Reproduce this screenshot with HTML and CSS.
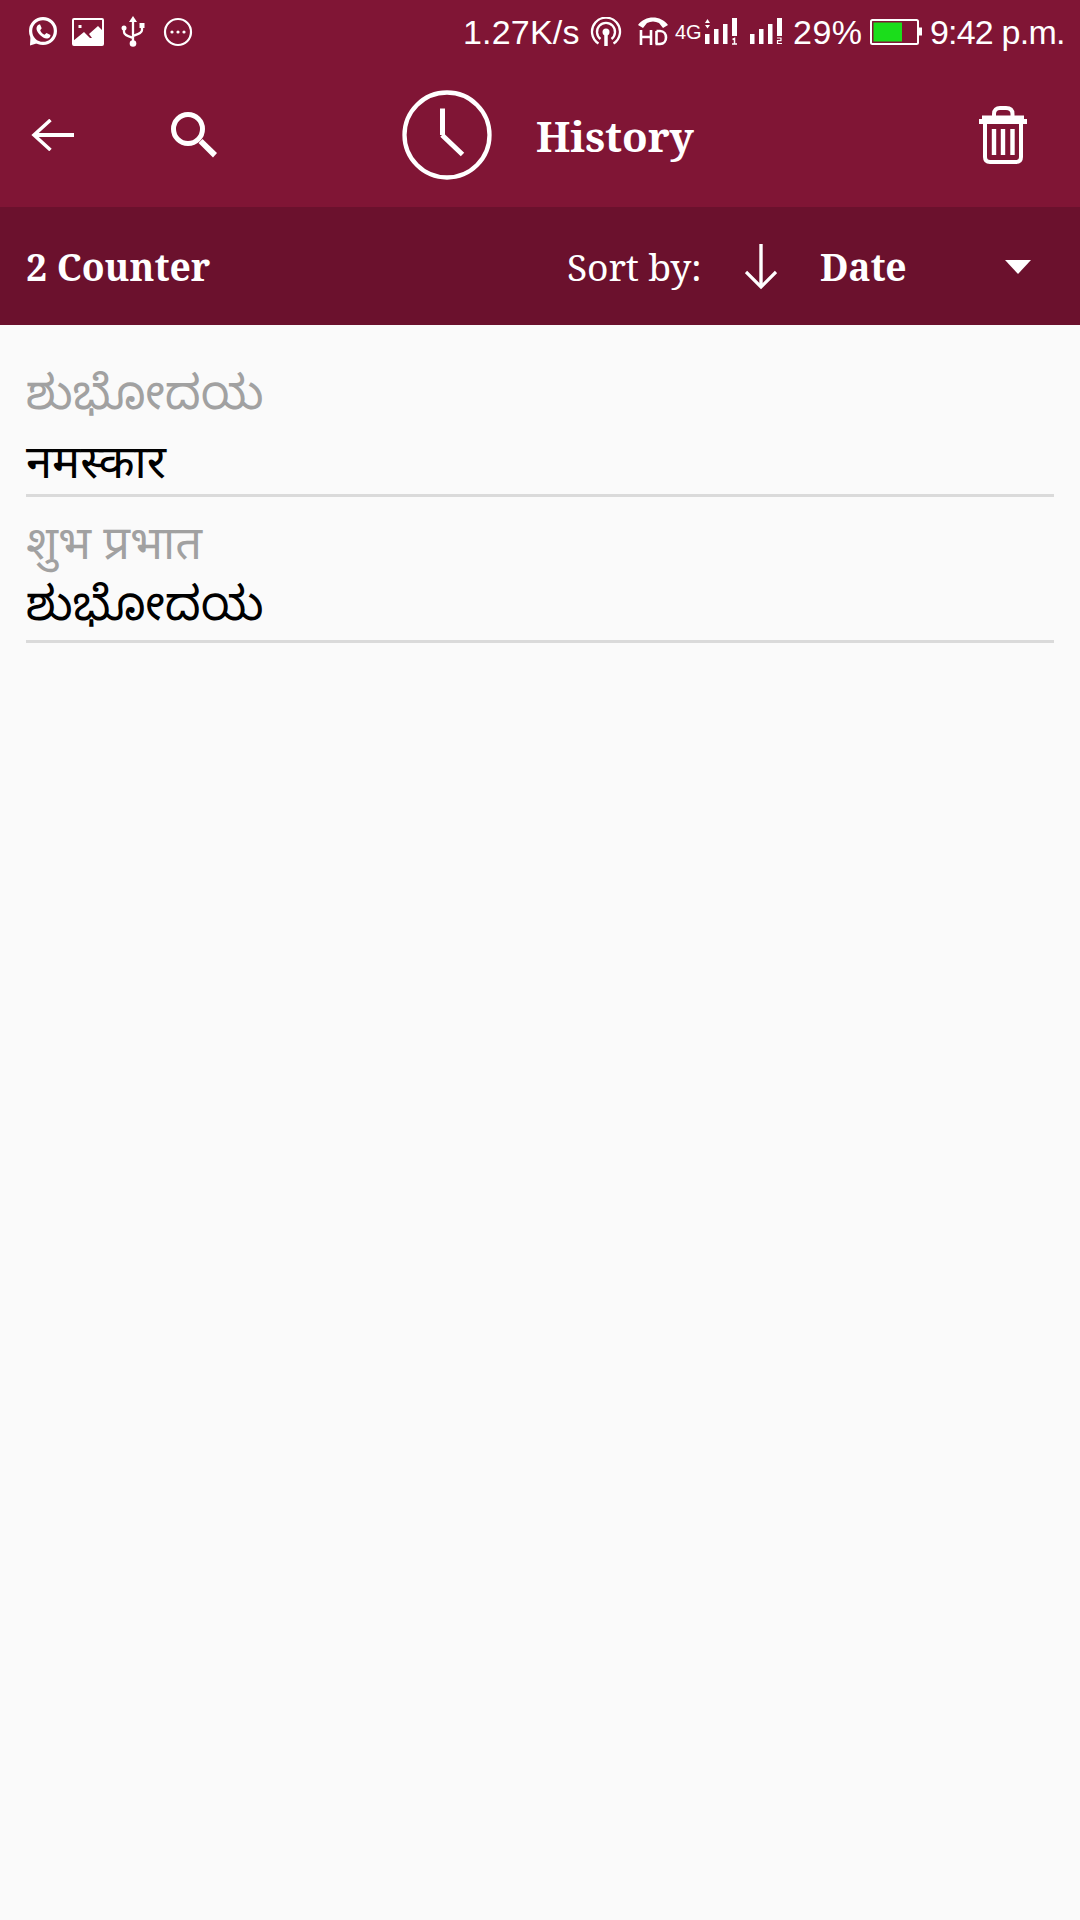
FILE: index.html
```html
<!DOCTYPE html>
<html lang="en">
<head>
    <meta charset="UTF-8">
    <meta name="viewport" content="width=device-width, initial-scale=1.0">
    <title>History</title>
    <link rel="stylesheet" href="styles.css">
</head>
<body>

<!-- Status bar -->
<div class="status-bar">
    <div class="notifications">
        <svg class="whatsapp" width="30" height="30" viewBox="0 0 30 30">
            <circle cx="15" cy="14" r="12.4" fill="none" stroke="#fff" stroke-width="3.200"/>
            <path d="M2.500 19L2 28.500L10 26Z" fill="#fff"/>
            <path d="M10 8c-3 3-1 7 2 10s7 5 10 2l.5-2-4-2-2 1.700c-2-1-3.500-2.500-4.300-4.500l1.500-2-1.700-4z" fill="#fff"/>
        </svg>
        <svg class="picture" width="32" height="28" viewBox="0 0 32 28">
            <rect x="1" y="1" width="30" height="26" rx="1" fill="none" stroke="#fff" stroke-width="2"/>
            <path d="M1 23L12 14L18 20L20 20L17 16L26 8L31 13V27H1Z" fill="#fff"/>
            <rect x="6.500" y="7" width="3" height="3" fill="#fff"/>
        </svg>
        <svg class="usb" width="26" height="32" viewBox="0 0 26 32">
            <path d="M13 4V27M4 12v4c0 3 4 4 9 6M22 8v6c0 3-4 4-9 6" fill="none" stroke="#fff" stroke-width="2.300"/>
            <path d="M13 0L17 6H9Z" fill="#fff"/>
            <circle cx="13" cy="27.500" r="3.300" fill="#fff"/>
            <circle cx="4" cy="12" r="2.500" fill="#fff"/>
            <rect x="19.500" y="7" width="5" height="5" fill="#fff"/>
        </svg>
        <svg class="more" width="30" height="30" viewBox="0 0 30 30">
            <circle cx="15" cy="15" r="13" fill="none" stroke="#fff" stroke-width="2.200"/>
            <circle cx="9" cy="15" r="1.600" fill="#fff"/>
            <circle cx="15" cy="15" r="1.600" fill="#fff"/>
            <circle cx="21" cy="15" r="1.600" fill="#fff"/>
        </svg>
    </div>
    <div class="system">
        <span class="speed">1.27K/s</span>
        <svg class="hotspot" width="32" height="30" viewBox="0 0 32 30">
            <g fill="none" stroke="#fff" stroke-width="2.300">
                <path d="M8.500 26.500A14 14 0 1 1 23.500 26.500"/>
                <path d="M10.500 22A9 9 0 1 1 21.500 22"/>
            </g>
            <circle cx="16" cy="15" r="3.500" fill="#fff"/>
            <path d="M16 15V29" stroke="#fff" stroke-width="3.500"/>
        </svg>
        <svg class="hd" width="32" height="30" viewBox="0 0 32 30">
            <path d="M1 8C8-2 24-2 31 8l-5 3-4-5c-4-2-8-2-12 0l-4 5z" fill="#fff"/>
            <path d="M4 13V28M14 13V28M4 20H14M19.500 14V27M19.500 14H23C31 14 31 27 23 27H18.500" fill="none" stroke="#fff" stroke-width="2.600"/>
        </svg>
        <span class="network">4G</span>
        <svg class="signal" width="34" height="28" viewBox="0 0 34 28">
            <path d="M1 5L3.500 1L6 5ZM1 7L3.500 10.500L6 7Z" fill="#fff"/>
            <path d="M1 16h4.500v10h-4.500zM10 11h4.500v15h-4.500zM19 6h4.500v20h-4.500zM28 0h5v18h-5z" fill="#fff"/>
            <path d="M28.500 21.500L30.500 20.500V26M28 26H33" fill="none" stroke="#fff" stroke-width="1.500"/>
        </svg>
        <svg class="signal signal-two" width="34" height="28" viewBox="0 0 34 28">
            <path d="M1 16h4.500v10h-4.500zM10 11h4.500v15h-4.500zM19 6h4.500v20h-4.500zM28 0h5v18h-5z" fill="#fff"/>
            <path d="M28 20H32V22.700H28.500V25.500H33" fill="none" stroke="#fff" stroke-width="1.200"/>
        </svg>
        <span class="percent">29%</span>
        <svg class="battery" width="52" height="26" viewBox="0 0 52 26">
            <rect x="1" y="1" width="47" height="24" rx="1.500" fill="none" stroke="#fff" stroke-width="2"/>
            <rect x="48" y="8.500" width="4" height="8" fill="#fff"/>
            <rect x="3.500" y="3.500" width="28.500" height="19" fill="#1bdd1b"/>
        </svg>
        <span class="time">9:42 p.m.</span>
    </div>
</div>

<!-- App header -->
<header class="toolbar">
    <svg class="back" width="44" height="32" viewBox="0 0 44 32">
        <path d="M43 16H4" fill="none" stroke="#fff" stroke-width="4"/>
        <path d="M19.500 1L3 16L19.500 31" fill="none" stroke="#fff" stroke-width="3.500"/>
    </svg>
    <svg class="search" width="46" height="46" viewBox="0 0 46 46">
        <circle cx="17" cy="17" r="14.500" fill="none" stroke="#fff" stroke-width="5"/>
        <path d="M27.500 31L31.500 27L46 41L42 45.500Z" fill="#fff"/>
    </svg>
    <svg class="clock" width="90" height="90" viewBox="0 0 90 90">
        <circle cx="45" cy="45" r="42.500" fill="none" stroke="#fff" stroke-width="4.300"/>
        <path d="M40.500 18.500V45M40 45L60.500 64.500" fill="none" stroke="#fff" stroke-width="5"/>
    </svg>
    <h1>History</h1>
    <svg class="trash" width="50" height="60" viewBox="0 0 50 60">
        <path d="M16 11V9C16 5 18.500 3 22 3H28C32 3 34.500 5 34.500 9V11" fill="none" stroke="#fff" stroke-width="4"/>
        <path d="M4 10.500H46V14H49V19H1V14H4Z" fill="#fff"/>
        <path d="M7 18V52Q7 57 12 57H38Q43 57 43 52V18" fill="none" stroke="#fff" stroke-width="4"/>
        <path d="M16 24V50M25 24V50M34.500 24V50" stroke="#fff" stroke-width="4.400"/>
    </svg>
</header>

<!-- Counter and sorting -->
<div class="sort-bar">
    <span class="counter">2 Counter</span>
    <span class="sort-label">Sort by:</span>
    <svg class="sort-arrow" width="32" height="48" viewBox="0 0 32 48">
        <path d="M16 1V44" stroke="#fff" stroke-width="3.400"/>
        <path d="M1 29L16 44L31 29" fill="none" stroke="#fff" stroke-width="3.200"/>
    </svg>
    <span class="sort-field">Date</span>
    <svg class="dropdown" width="26" height="14" viewBox="0 0 26 14">
        <path d="M0 0H26L13 14Z" fill="#fff"/>
    </svg>
</div>

<!-- Translations -->
<ul class="history">
    <li class="entry first">
        <p class="source" lang="kn">ಶುಭೋದಯ</p>
        <p class="result" lang="hi">नमस्कार</p>
    </li>
    <li class="entry second">
        <p class="source" lang="hi">शुभ प्रभात</p>
        <p class="result" lang="kn">ಶುಭೋದಯ</p>
    </li>
</ul>

</body>
</html>
```
FILE: styles.css
```css
* {
    box-sizing: border-box;
}
body {
    margin: 0;
    min-height: 1920px;
    background-color: #fafafa;
    color: #000;
    font-family: "Noto Serif", "Droid Serif", "DejaVu Serif", serif;
}
svg {
    display: block;
    flex: none;
}
span, h1 {
    white-space: nowrap;
}
.status-bar {
    display: flex;
    justify-content: space-between;
    height: 66px;
    padding: 0 15px 0 28px;
    background-color: #801535;
    color: #fff;
    font-family: "Liberation Sans", Arial, sans-serif;
    font-size: 34px;
    line-height: 66px;
}
.notifications, .system {
    display: flex;
    align-items: center;
    height: 64px;
}
.picture {
    margin-left: 14px;
}
.usb {
    margin-left: 16px;
}
.more {
    margin-left: 17px;
}
.speed {
    width: 117px;
    letter-spacing: 0.2px;
}
.hotspot {
    margin-left: 10px;
}
.hd {
    margin-left: 15px;
}
.network {
    width: 28px;
    margin-left: 6px;
    font-size: 20px;
}
.signal {
    margin-left: 1px;
    margin-bottom: 1px;
}
.signal-two {
    margin-left: 11px;
}
.percent {
    width: 70px;
    margin-left: 10px;
    letter-spacing: 0.5px;
}
.battery {
    margin-left: 7px;
    margin-bottom: 1px;
}
.time {
    width: 135px;
    margin-left: 8px;
    letter-spacing: -0.8px;
}
.toolbar {
    display: flex;
    align-items: center;
    height: 141px;
    padding: 0 52px 3px 31px;
    background-color: #801535;
    color: #fff;
}
.toolbar h1 {
    margin: 0 0 0 44px;
    font-size: 42px;
    font-weight: bold;
    letter-spacing: -0.1px;
}
.back {
    margin-top: -1px;
}
.search {
    margin-left: 96px;
}
.clock {
    margin-left: 185px;
    margin-top: -1px;
}
.trash {
    margin-left: auto;
}
.sort-bar {
    display: flex;
    align-items: center;
    height: 118px;
    padding: 0 49px 0 26px;
    background-color: #6b112d;
    color: #fff;
    font-size: 37.3px;
}
.counter, .sort-field {
    font-weight: bold;
}
.counter {
    width: 541px;
}
.sort-label {
    width: 178px;
    letter-spacing: -0.2px;
}
.sort-arrow {
    margin-top: 2px;
}
.sort-field {
    margin-left: 43px;
    letter-spacing: -0.3px;
}
.dropdown {
    margin-left: auto;
    margin-top: 2px;
}
.history {
    margin: 0;
    padding: 0 26px;
    list-style: none;
    font-family: "Noto Sans", "Noto Sans Kannada", "Noto Sans Devanagari", sans-serif;
    font-size: 47px;
}
.entry {
    border-bottom: 3px solid #dadada;
}
.entry p {
    margin: 0;
    height: 63px;
    line-height: 63px;
    white-space: nowrap;
}
.first {
    height: 172px;
    padding-top: 35px;
}
.first .source {
    height: 69px;
}
.second {
    height: 146px;
    padding-top: 13px;
}
.second .source {
    height: 61px;
}
.entry .source {
    color: #a1a1a1;
}
```
